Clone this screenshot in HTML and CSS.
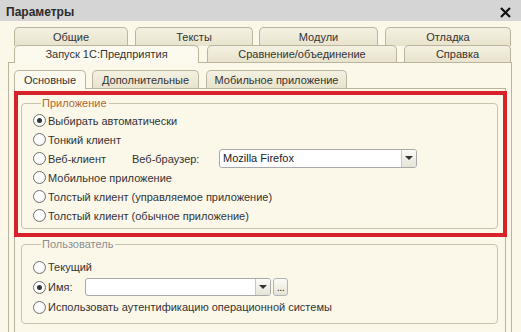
FILE: index.html
```html
<!DOCTYPE html>
<html lang="ru">
<head>
<meta charset="utf-8">
<title>Параметры</title>
<link rel="stylesheet" href="styles.css">
</head>
<body>
<div class="titlebar">
  <span class="title">Параметры</span>
  <svg class="close" width="11" height="11" viewBox="0 0 11 11"><path d="M1 1L10 10M10 1L1 10" stroke="#111" stroke-width="2.2"/></svg>
</div>
<div class="window">
  <div class="tabrow r1">
    <div class="tab t-obsh">Общие</div>
    <div class="tab t-text">Тексты</div>
    <div class="tab t-mod">Модули</div>
    <div class="tab t-dbg">Отладка</div>
  </div>
  <div class="tabrow r2">
    <div class="tab active t-run">Запуск 1С:Предприятия</div>
    <div class="tab t-cmp">Сравнение/объединение</div>
    <div class="tab t-help">Справка</div>
  </div>
  <div class="panel">
    <div class="tabrow inner">
      <div class="tab active t-main">Основные</div>
      <div class="tab t-add">Дополнительные</div>
      <div class="tab t-mob">Мобильное приложение</div>
    </div>
    <div class="subpanel">
      <div class="highlight">
        <fieldset class="group g-app">
          <legend class="legend accent">Приложение</legend>
          <div class="opt"><span class="radio checked"></span>Выбирать автоматически</div>
          <div class="opt"><span class="radio"></span>Тонкий клиент</div>
          <div class="opt"><span class="radio"></span><span class="web-lbl">Веб-клиент</span><span class="br-lbl">Веб-браузер:</span>
            <div class="combo browser"><span class="combo-text">Mozilla Firefox</span><span class="drop"><span class="tri"></span></span></div>
          </div>
          <div class="opt"><span class="radio"></span>Мобильное приложение</div>
          <div class="opt"><span class="radio"></span>Толстый клиент (управляемое приложение)</div>
          <div class="opt"><span class="radio"></span>Толстый клиент (обычное приложение)</div>
        </fieldset>
      </div>
      <fieldset class="group g-user">
        <legend class="legend">Пользователь</legend>
        <div class="opt tall"><span class="radio"></span>Текущий</div>
        <div class="opt tall"><span class="radio checked"></span><span class="name-lbl">Имя:</span>
          <div class="combo user"><span class="combo-text"></span><span class="drop"><span class="tri"></span></span></div>
          <div class="dots">...</div>
        </div>
        <div class="opt tall"><span class="radio"></span>Использовать аутентификацию операционной системы</div>
      </fieldset>
    </div>
  </div>
</div>
</body>
</html>
```
FILE: styles.css
```css
* { box-sizing: border-box; }
html, body { margin: 0; padding: 0; }
body {
  width: 521px;
  height: 332px;
  overflow: hidden;
  background: #fbf8ea;
  font-family: "Liberation Sans", Arial, sans-serif;
  font-size: 11px;
  color: #333;
}
.titlebar {
  height: 21px;
  background: #d5d5d5;
  display: flex;
  align-items: center;
  justify-content: space-between;
  padding: 2px 10px 0 6px;
}
.title { font-weight: bold; font-size: 12px; color: #2a2a2a; }
.close { display: block; margin-top: 1px; }
.window { padding: 6px 9px 0 8px; }
.tabrow { display: flex; }
.tabrow.r1, .tabrow.r2 { padding-left: 6px; }
.tab {
  height: 19px;
  border: 1px solid #bcb59e;
  border-bottom: none;
  border-radius: 5px 5px 0 0;
  background: linear-gradient(#f4f1e2, #e8e3cc);
  display: flex;
  align-items: center;
  justify-content: center;
  color: #333;
  white-space: nowrap;
}
.r2 { margin-top: -1px; }
.r2 .tab { height: 17px; }
.tab.active {
  background: #fcfaef;
  margin-bottom: -1px;
}
.r2 .tab.active { height: 18px; }
.t-obsh { width: 114px; }
.t-text { width: 118px; margin-left: 7px; }
.t-mod { width: 119px; margin-left: 6px; }
.t-dbg { width: 126px; margin-left: 7px; }
.t-run { width: 185px; padding-bottom: 1px; }
.t-cmp { width: 190px; margin-left: 8px; }
.t-help { width: 107px; margin-left: 7px; }
.panel {
  border: 1px solid #bcb59e;
  border-bottom: none;
  height: 270px;
  padding: 7px 5px 0 5px;
  background: #fbf8ea;
}
.tabrow.inner .tab { height: 18px; }
.tabrow.inner .tab.active { height: 19px; padding-bottom: 1px; }
.t-main { width: 72px; }
.t-add { width: 107px; margin-left: 6px; }
.t-mob { width: 141px; margin-left: 7px; }
.subpanel {
  border: 1px solid #bcb59e;
  border-bottom: none;
  height: 244px;
  background: #fbf8ea;
}
.highlight {
  border: 4px solid #d8222b;
  margin: 2px -2px 0 -1px;
}
.group {
  border: 1px solid #c9c3ad;
  border-radius: 4px;
  min-width: 0;
}
.g-app {
  margin: 1px 5px 4px 3px;
  padding: 0 0 3px 11px;
}
.g-user {
  margin: 0 7px 0 6px;
  padding: 5px 0 6px 11px;
}
.legend {
  line-height: 15px;
  padding: 0 2px 0 1px;
  margin-left: 8px;
  color: #8d8d8d;
}
.legend.accent { color: #b0662f; }
.opt {
  height: 19px;
  display: flex;
  align-items: center;
  white-space: nowrap;
}
.opt.tall { height: 20px; }
.radio {
  width: 13px;
  height: 13px;
  border: 1px solid #6f6f6f;
  border-radius: 50%;
  background: radial-gradient(circle at 40% 35%, #ffffff 40%, #ecebe4);
  margin-right: 2px;
  flex: none;
  display: flex;
  align-items: center;
  justify-content: center;
}
.radio.checked::after {
  content: "";
  width: 5px;
  height: 5px;
  border-radius: 50%;
  background: #333;
}
.web-lbl { width: 84px; }
.br-lbl { width: 87px; }
.combo {
  height: 19px;
  border: 1px solid #a9a9a9;
  border-radius: 3px;
  background: #fff;
  display: flex;
  align-items: stretch;
}
.combo.browser { width: 198px; margin-top: -1px; }
.combo.user { width: 186px; height: 18px; }
.combo-text { flex: 1; padding-left: 3px; display: flex; align-items: center; color: #222; }
.drop {
  width: 15px;
  border-left: 1px solid #c8c8c8;
  background: linear-gradient(#fbfbf7, #e6e3d6);
  border-radius: 0 2px 2px 0;
  display: flex;
  align-items: center;
  justify-content: center;
}
.tri {
  width: 0;
  height: 0;
  border-left: 4px solid transparent;
  border-right: 4px solid transparent;
  border-top: 4px solid #333;
}
.name-lbl { width: 37px; }
.dots {
  width: 15px;
  height: 18px;
  margin-left: 2px;
  border: 1px solid #b3b3b3;
  border-radius: 3px;
  background: linear-gradient(#fbfbf7, #e6e3d6);
  font-size: 11px;
  line-height: 17px;
  text-align: center;
  letter-spacing: -0.5px;
  color: #333;
}
```
